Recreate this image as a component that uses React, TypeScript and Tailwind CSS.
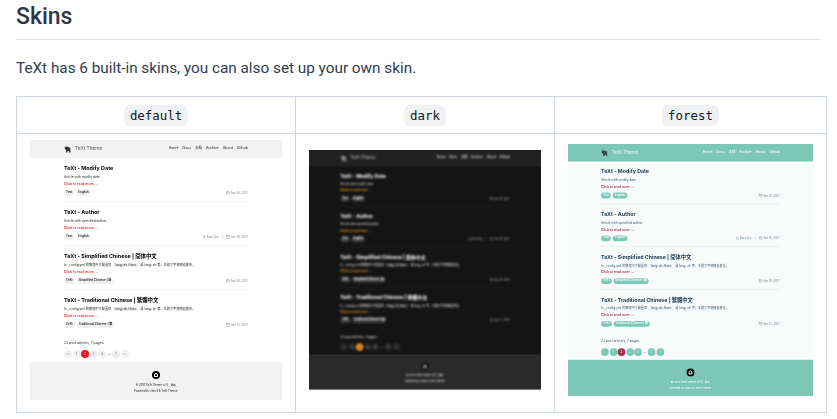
import { Calendar, User } from 'lucide-react';

type Skin = {
  name: string;
  width: number;
  blur: string;
  page: string;
  header: string;
  footer: string;
  title: string;
  text: string;
  muted: string;
  link: string;
  tag: string;
  tagText: string;
  code: string;
  line: string;
  nav: string;
  brand: string;
  pageBtn: string;
  active: string;
  activeText: string;
  footerText: string;
  logo: string;
};

const skins: Skin[] = [
  {
    name: 'default',
    width: 252,
    blur: 'blur-[0.6px]',
    page: 'bg-white',
    header: 'bg-[#f2f2f2]',
    footer: 'bg-[#f2f2f2]',
    title: 'text-[#000000]',
    text: 'text-[#222222]',
    muted: 'text-[#888888]',
    link: 'text-[#f5222d]',
    tag: 'bg-[#f0f0f0]',
    tagText: 'text-[#222222]',
    code: 'bg-[#f0f0f0]',
    line: 'border-[#f0f0f0]',
    nav: 'text-[#333333]',
    brand: 'text-[#555555]',
    pageBtn: 'bg-[#f0f0f0] text-[#666666]',
    active: 'bg-[#fc0f1c]',
    activeText: 'text-white',
    footerText: 'text-[#222222]',
    logo: '#333333',
  },
  {
    name: 'dark',
    width: 232,
    blur: 'blur-[0.9px]',
    page: 'bg-[#141414]',
    header: 'bg-[#212121]',
    footer: 'bg-[#2a2a2a]',
    title: 'text-[#ffffff]',
    text: 'text-[#e8e8e8]',
    muted: 'text-[#a8a8a8]',
    link: 'text-[#ffa726]',
    tag: 'bg-[#404040]',
    tagText: 'text-[#ffffff]',
    code: 'bg-[#2c2c2c]',
    line: 'border-[#1f1f1f]',
    nav: 'text-[#f4f4f4]',
    brand: 'text-[#c8c8c8]',
    pageBtn: 'bg-[#2a2a2a] text-[#b0b0b0]',
    active: 'bg-[#e8911f]',
    activeText: 'text-[#222222]',
    footerText: 'text-[#ffffff]',
    logo: '#909090',
  },
  {
    name: 'forest',
    width: 245,
    blur: 'blur-[0.6px]',
    page: 'bg-[#f7fcfb]',
    header: 'bg-[#7dc7b6]',
    footer: 'bg-[#7dc7b6]',
    title: 'text-[#22405a]',
    text: 'text-[#3d5668]',
    muted: 'text-[#6d8a9e]',
    link: 'text-[#a0334b]',
    tag: 'bg-[#7dc7b6]',
    tagText: 'text-white',
    code: 'bg-[#eaf2f1]',
    line: 'border-[#e6f0ee]',
    nav: 'text-white',
    brand: 'text-[#f2fbf9]',
    pageBtn: 'bg-[#7dc7b6] text-[#d8f0ea]',
    active: 'bg-[#a0334b]',
    activeText: 'text-white',
    footerText: 'text-white',
    logo: '#3a4a4a',
  },
];

const articles = [
  { title: 'TeXt - Modify Date', excerpt: 'Article with modify date.', tags: ['Test', 'English'], date: 'Apr 18, 2017', author: false, code: false },
  { title: 'TeXt - Author', excerpt: 'Article with specified author.', tags: ['Test', 'English'], date: 'Apr 16, 2017', author: true, code: false },
  { title: 'TeXt - Simplified Chinese | 简体中文', excerpt: 'In _config.yml 的教程中文配置项', tags: ['TeXt', 'Simplified Chinese | 简'], date: 'Apr 16, 2017', author: false, code: true },
  { title: 'TeXt - Traditional Chinese | 繁體中文', excerpt: 'In _config.yml 的教程中文配置项', tags: ['TeXt', 'Traditional Chinese | 繁'], date: 'Apr 13, 2017', author: false, code: true },
];

function Thumb({ skin }: { skin: Skin }) {
  const scale = skin.width / 252;
  return (
    <div className="mx-auto overflow-hidden" style={{ width: skin.width, height: 260 * scale }}>
      <div
        className={`w-[252px] h-[260px] flex flex-col origin-top-left font-['Inter','Noto_Sans_CJK_SC',sans-serif] ${skin.page}`}
        style={{ transform: `scale(${scale})` }}
      >
        <div className={`h-[18px] shrink-0 px-[34px] ${skin.header}`}>
          <div className={`h-full flex items-center justify-between ${skin.blur}`}>
            <div className={`flex items-center gap-[4px] text-[4.8px] ${skin.brand}`}>
              <svg viewBox="0 0 12 12" className="w-[7px] h-[7px]" fill={skin.logo}>
                <path d="M1 3 Q2 0.5 5 1 L9 2 Q11 3 11 6 L11 11 L8.5 11 L8.5 8.5 L6 8.5 L6 11 L3.5 11 L3.5 7 Q1 6 1 3 Z" />
              </svg>
              <span>TeXt Theme</span>
            </div>
            <div className={`flex gap-[4px] text-[3.5px] font-medium ${skin.nav}`}>
              <span>Home</span>
              <span>Docs</span>
              <span>文档</span>
              <span>Archive</span>
              <span>About</span>
              <span>Github</span>
            </div>
          </div>
        </div>

        <div className={`flex-1 px-[34px] ${skin.blur}`}>
          {articles.map((a, i) => (
            <div key={a.title} className={`h-[44px] pt-[6px] ${i < 3 ? `border-b ${skin.line}` : ''}`}>
              <div className={`text-[5.4px] leading-[9px] font-bold ${skin.title}`}>{a.title}</div>
              <div className={`mt-[1px] text-[3.2px] leading-[7px] whitespace-nowrap ${skin.text}`}>
                {a.excerpt}
                {a.code && <span className={`mx-[2px] px-[2px] ${skin.code}`}>lang: zh-Hans</span>}
                {a.code && <span>或 lang: zh 等，主题文字将随着变化。</span>}
              </div>
              <div className={`text-[3.4px] leading-[7px] font-semibold ${skin.link}`}>Click to read more ...</div>
              <div className="mt-[2px] flex items-center justify-between">
                <div className="flex gap-[2px]">
                  {a.tags.map((t) => (
                    <span key={t} className={`px-[2px] rounded-[3px] text-[3px] leading-[5.5px] font-semibold ${skin.tag} ${skin.tagText}`}>
                      {t}
                    </span>
                  ))}
                </div>
                <div className={`flex items-center gap-[1px] text-[3px] ${skin.muted}`}>
                  {a.author && (
                    <>
                      <User className="w-[4px] h-[4px]" />
                      <span className="mr-[2px]">Kara Qin</span>
                      <span className="mr-[2px]">|</span>
                    </>
                  )}
                  <Calendar className="w-[4px] h-[4px]" />
                  <span>{a.date}</span>
                </div>
              </div>
            </div>
          ))}
          <div className={`mt-[6px] text-[3.4px] leading-[7px] ${skin.text}`}>23 post articles, 7 pages.</div>
          <div className="mt-[3px] flex items-center gap-[0.5px] text-[3px]">
            {['<', '1', '2', '3', '4', '...', '7', '>'].map((p) =>
              p === '...' ? (
                <span key={p} className={`w-[5px] text-center ${skin.text}`}>—</span>
              ) : (
                <span
                  key={p}
                  className={`w-[8px] h-[8px] rounded-full flex items-center justify-center ${p === '2' ? `${skin.active} ${skin.activeText}` : skin.pageBtn}`}
                >
                  {p}
                </span>
              )
            )}
          </div>
        </div>

        <div className={`h-[38px] shrink-0 pt-[9px] ${skin.footer}`}>
          <div className={`flex flex-col items-center ${skin.blur}`}>
            <div className="w-[8px] h-[8px] rounded-full bg-black flex items-center justify-center">
              <div className="w-[3.5px] h-[3.5px] rounded-t-full border-[0.7px] border-white" />
            </div>
            <div className={`mt-[3px] text-[2.8px] leading-[6px] ${skin.footerText}`}>© 2017 TeXt Theme 公司 · 隐私</div>
            <div className={`text-[2.8px] leading-[6px] ${skin.footerText}`}>Powered by Jekyll &amp; TeXt Theme.</div>
          </div>
        </div>
      </div>
    </div>
  );
}

export default function App() {
  return (
    <div className="h-[419px] overflow-hidden bg-white px-4 font-['Roboto',sans-serif] text-[#2d3748]">
      <h2 className="h-10 border-b border-[#d8dee4] text-[23px] leading-[33px] font-medium">Skins</h2>
      <p className="mt-[18px] text-[15.3px] leading-[20px] text-[#2f3d4f]">TeXt has 6 built-in skins, you can also set up your own skin.</p>

      <table className="mt-[18px] w-[811px] table-fixed border-collapse">
        <thead>
          <tr className="h-[37px]">
            {skins.map((s, i) => (
              <th
                key={s.name}
                className={`border border-[#cfd7e1] p-0 text-center font-normal ${i === 0 ? 'w-[279px]' : i === 1 ? 'w-[259px]' : 'w-[272px]'}`}
              >
                <code className="inline-block rounded-md bg-[#f0f1f3] px-[6px] py-[1px] font-['DejaVu_Sans_Mono',monospace] text-[12.4px] leading-[19px] font-medium text-[#111827]">
                  {s.name}
                </code>
              </th>
            ))}
          </tr>
        </thead>
        <tbody>
          <tr className="h-[279px]">
            {skins.map((s) => (
              <td key={s.name} className="border border-[#cfd7e1] p-0 pb-[6px] align-middle">
                <Thumb skin={s} />
              </td>
            ))}
          </tr>
        </tbody>
      </table>
    </div>
  );
}
